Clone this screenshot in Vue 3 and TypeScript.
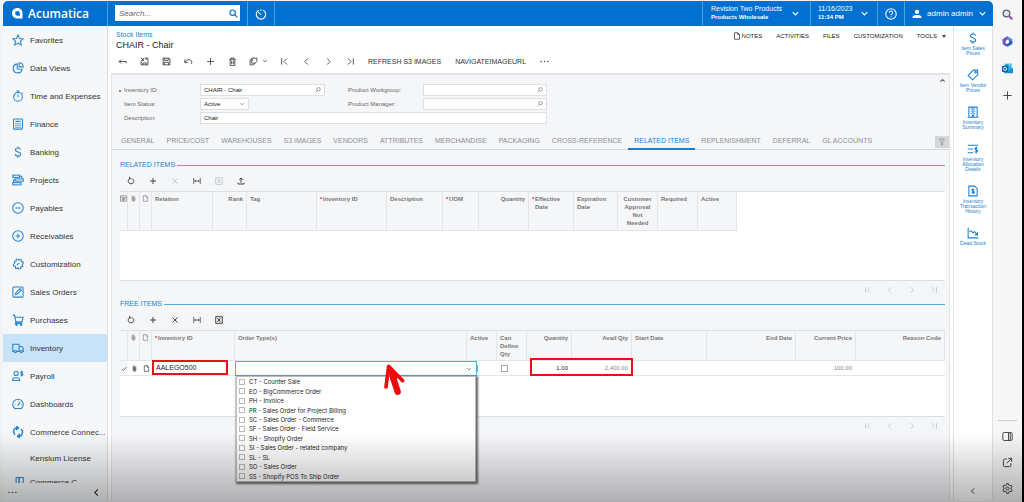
<script setup lang="ts">
import { h, ref } from 'vue'

const glyphs: Record<string, string> = {
  star: '<path d="M8 1.2l2 4.7 5 .4-3.8 3.3 1.2 5L8 12l-4.400 2.600 1.200-5L1 6.300l5-.4z"/>',
  pie: '<path d="M7 2.500a6 6 0 1 0 6.500 7L7 9.200z"/><path d="M9.500 1v5.500H15A5.700 5.700 0 0 0 9.500 1z"/>',
  stopwatch: '<circle cx="8" cy="9.200" r="5.800"/><path d="M8 9.500V6M6 1.200h4M8 1.200v2M13 3.500l1.200 1.200"/>',
  calculator: '<rect x="2" y="1.200" width="12" height="13.600" rx="1"/><path d="M4.500 4.500h7M4.500 7.500h1.600M7.200 7.500h1.600M10 7.500h1.600M4.500 10h1.600M7.200 10h1.600M10 10h1.600M4.500 12.500h1.600M7.200 12.500h1.600M10 12.500h1.600"/>',
  dollar: '<path d="M11.500 4.800C11.200 3.300 9.800 2.700 8 2.700c-2 0-3.400.9-3.400 2.500 0 3.600 7 1.800 7 5.400 0 1.700-1.600 2.700-3.600 2.700s-3.500-.8-3.700-2.500M8 .5v2.200M8 13.300v2.200"/>',
  gantt: '<rect x="1" y="1.500" width="9" height="3"/><rect x="4" y="6.500" width="11" height="3"/><rect x="1" y="11.500" width="11" height="3"/><path d="M10 3h3v3.500M4 8H2v3.500"/>',
  minusCircle: '<circle cx="8" cy="8" r="7"/><path d="M4.800 8h6.400"/>',
  plusCircle: '<circle cx="8" cy="8" r="7"/><path d="M5 8h6M8 5v6"/>',
  puzzle: '<path d="M3.500 4.500l2.200-.6C4.800 1.500 8 .2 8.800 2.800l3-.9.9 3c2.600-.5 3.200 2.700.8 3.500l.8 3-2.700.8c.6 2.500-2.600 3.300-3.400 1L5 14l-.9-3.200C1.500 11.500.8 8.300 3.200 7.500z"/><path d="M6.500 9.500l3-3"/>',
  edit: '<rect x="1.200" y="1.200" width="13.600" height="13.600" rx="1.500"/><path d="M4.500 11.500l.7-2.500 5.600-5.600 1.800 1.800L7 10.800z"/>',
  cart: '<path d="M1 1.500h2.300l2 9h8l1.500-6.300H4M5.300 10.500l-.8 2h9"/><circle cx="6" cy="14.300" r=".9"/><circle cx="12" cy="14.300" r=".9"/>',
  truck: '<path d="M3 12.500H1V3h8.500v9.500H6M9.500 6H13l2.200 3v3.500H14M9.500 12.500H11"/><circle cx="4.500" cy="12.700" r="1.500"/><circle cx="12.500" cy="12.700" r="1.500"/>',
  payroll: '<circle cx="5.500" cy="4.500" r="2.800"/><path d="M.8 14v-1.500c0-2.800 9.400-2.800 9.400 0V14zM14.500 3.200c-.5-1.500-3-1.200-3 .2 0 1.700 3.200 1 3.200 2.700 0 1.500-3 1.600-3.400 0M13 1v7.500"/>',
  gauge: '<path d="M3.500 14a7 7 0 1 1 9 0z"/><path d="M7.500 10.500L11 5.500M3.500 9h1M8 3.500v1M12 9h1"/>',
  sync: '<path d="M6 2.300C1.500 3.300.8 9 4 11.800M10 13.700c4.500-1 5.200-6.700 2-9.500" stroke-width="2"/><path d="M6 0l3 2.500L6 5zM10 11l-3 2.500L10 16z" fill="currentColor"/>',
  screens: '<path d="M1 12h4M1 15h14" stroke-width="2"/><rect x="5.500" y="2" width="4" height="9"/><rect x="9.500" y="2" width="5.500" height="9"/>',
  search: '<circle cx="6.500" cy="6.500" r="4.800"/><path d="M10 10l5 5"/>',
  lookup: '<circle cx="9.500" cy="6" r="4.500"/><path d="M6.500 9.500L1.500 14.500"/>',
  timer: '<path d="M5 3a6.300 6.300 0 1 0 6 0M8 1.500V4M8 9L4.500 5.500"/>',
  help: '<circle cx="8" cy="8" r="7"/><path d="M5.800 6.200c0-3 4.400-2.700 4.400 0 0 1.600-2.200 1.700-2.200 3.300M8 11v1.300"/>',
  user: '<circle cx="8" cy="4.500" r="3.500" fill="currentColor" stroke="none"/><path d="M1 14.500v-2c0-3.800 14-3.800 14 0v2z" fill="currentColor" stroke="none"/>',
  down: '<path d="M3 5.500l5 5 5-5"/>',
  up: '<path d="M3 10.500l5-5 5 5"/>',
  left: '<path d="M10.500 2.500L5 8l5.500 5.500"/>',
  right: '<path d="M5.500 2.500L11 8l-5.500 5.500"/>',
  first: '<path d="M3 2.500v11M12.500 2.500L7 8l5.500 5.500"/>',
  last: '<path d="M13 2.500v11M3.500 2.500L9 8l-5.500 5.500"/>',
  back: '<path d="M14.500 11V8H2M5.500 4.500L2 8l3.500 3.500"/>',
  saveClose: '<path d="M2 7.500V14h12V2H8M5 14v-3.500h6V14M1.500 1.500L6 6M6 2v4H2M11 2v3"/>',
  save: '<path d="M2 2h11l1 1v11H2zM4.500 2v4h6.500V2M4 14V9.500h8V14"/>',
  undo: '<path d="M2 9.500C4 3.500 13 3 14 9c.3 1.500-.5 2.800-1.500 3.500M1.500 4.500v5.200h5"/>',
  plus: '<path d="M8 2v12M2 8h12"/>',
  trash: '<path d="M2.500 4h11M5.500 4V1.800h5V4M3.800 4v11h8.400V4M6.500 6.500v6M9.500 6.500v6"/>',
  copy: '<path d="M2 5h5M2 5v9h6l3-3M5 2h9v6l-3 3H5z"/>',
  dots: '<g fill="currentColor" stroke="none"><circle cx="2" cy="8" r="1.300"/><circle cx="8" cy="8" r="1.300"/><circle cx="14" cy="8" r="1.300"/></g>',
  doc: '<path d="M3 1.500h6.500L13 5v9.500H3zM9.500 1.500V5H13"/>',
  refresh: '<path d="M10.500 3.200a5.500 5.500 0 1 1-5 0M5 0v3.800h4"/>',
  cross: '<path d="M3 3l10 10M13 3L3 13"/>',
  fit: '<path d="M1.500 2v12M14.500 2v12M3 8h10M5.500 6L3.500 8l2 2M10.500 6l2 2-2 2" stroke-width="1.400"/>',
  excel: '<rect x="1.500" y="1.500" width="13" height="13"/><path d="M5 4.500l6 7M11 4.500l-6 7" stroke-width="2"/>',
  upload: '<path d="M8 11.500V2M4.500 5.500L8 2l3.500 3.500M2 11.500V14h12v-2.500"/>',
  clip: '<path d="M11 5v6.500a3 3 0 0 1-6 0V4a2 2 0 0 1 4 0v7a1 1 0 0 1-2 0V5" stroke-width="1.600"/>',
  gridIcon: '<rect x="1.500" y="2" width="13" height="12"/><path d="M1.500 5h13M5 8h6v3.500H5zM8 5v9"/>',
  check: '<path d="M2.500 10l3 2L13 5"/>',
  tag: '<path d="M1.500 8.500l7-7H14l.5 6-7 7z"/><circle cx="11.500" cy="4.300" r="1"/>',
  building: '<path d="M2.500 15V1.500h11V15M.8 15h14.400M5 4h1.500M9.500 4H11M5 7h1.500M9.500 7H11M5 10h1.500M9.500 10H11M7 15v-2.500h2V15M8 2v9"/>',
  allocation: '<path d="M1 3h14M1 8h7M1 13h7M14 6.800c-1-1-3.500-.8-3.500.8 0 1.800 3.700 1.200 3.700 3s-3 1.800-4 .8M12.300 5v9"/>',
  history: '<path d="M2.500 1.500H10L13.500 5v9.500h-11z"/><path d="M9.800 6.200c-1-1-3.300-.8-3.300.7 0 1.600 3.500 1.100 3.500 2.800 0 1.500-2.700 1.600-3.700.6M8.200 4.500v7.500"/>',
  chart: '<path d="M1.500 1v13.500H15M3 6l3-1 2 3 2-2 4 4.500M14 7v3.500h-3.500"/>',
  filter: '<path d="M3 2h10L9.500 7v3.500h-3V7zM8 10v4M5.500 12L8 14.500l2.500-2.500"/>',
  panel: '<rect x="1.200" y="2.200" width="13.600" height="11.600" rx="2"/><path d="M9.500 2.500v11M12 2.500v11"/>',
  external: '<path d="M7 3H4a2 2 0 0 0-2 2v7a2 2 0 0 0 2 2h7a2 2 0 0 0 2-2V9M9 2h5v5M14 2L7 9"/>',
  gear: '<path d="M6.700 1h2.600l.5 2.100 1.600.9 2.100-.7 1.300 2.300-1.600 1.500v1.800l1.600 1.500-1.300 2.300-2.100-.7-1.600.9-.5 2.100H6.700l-.5-2.100-1.600-.9-2.100.7-1.300-2.300 1.600-1.500V7.100L1.200 5.600l1.300-2.300 2.100.7 1.600-.9z"/><circle cx="8" cy="8" r="2.200"/>',
}

const Icon = (props: { name: string }) =>
  h('svg', { class: 'icon', viewBox: '0 0 16 16', 'aria-hidden': 'true', innerHTML: glyphs[props.name] })
Icon.props = ['name']

const nav = [
  ['star', 'Favorites'], ['pie', 'Data Views'], ['stopwatch', 'Time and Expenses'], ['calculator', 'Finance'],
  ['dollar', 'Banking'], ['gantt', 'Projects'], ['minusCircle', 'Payables'], ['plusCircle', 'Receivables'],
  ['puzzle', 'Customization'], ['edit', 'Sales Orders'], ['cart', 'Purchases'], ['truck', 'Inventory'],
  ['payroll', 'Payroll'], ['gauge', 'Dashboards'], ['sync', 'Commerce Connec...'],
]
const tabs = ['GENERAL', 'PRICE/COST', 'WAREHOUSES', 'S3 IMAGES', 'VENDORS', 'ATTRIBUTES', 'MERCHANDISE', 'PACKAGING',
  'CROSS-REFERENCE', 'RELATED ITEMS', 'REPLENISHMENT', 'DEFERRAL', 'GL ACCOUNTS']
const activeTab = ref('RELATED ITEMS')

const recordActions = [
  ['back', 'Back'], ['saveClose', 'Save and close'], ['save', 'Save'], ['undo', 'Undo'], ['plus', 'Add'], ['trash', 'Delete'],
]
const pager = [['first', 'First'], ['left', 'Previous'], ['right', 'Next'], ['last', 'Last']]

interface Action { icon: string; label: string; off?: boolean }
const relatedActions: Action[] = [
  { icon: 'refresh', label: 'Refresh' }, { icon: 'plus', label: 'Add row' }, { icon: 'cross', label: 'Delete row', off: true },
  { icon: 'fit', label: 'Fit columns' }, { icon: 'excel', label: 'Export', off: true }, { icon: 'upload', label: 'Upload' },
]
const freeActions: Action[] = [
  { icon: 'refresh', label: 'Refresh' }, { icon: 'plus', label: 'Add row' }, { icon: 'cross', label: 'Delete row' },
  { icon: 'fit', label: 'Fit columns' }, { icon: 'excel', label: 'Export' },
]

interface Column { text?: string; icon?: string; cls: string; align?: string; required?: boolean }
const relatedColumns: Column[] = [
  { icon: 'gridIcon', cls: 'w8' }, { icon: 'clip', cls: 'w12' }, { icon: 'doc', cls: 'w12' },
  { text: 'Relation', cls: 'w61' }, { text: 'Rank', cls: 'w34', align: 'end' }, { text: 'Tag', cls: 'w70' },
  { text: 'Inventory ID', cls: 'w70', required: true }, { text: 'Description', cls: 'w56' },
  { text: 'UOM', cls: 'w36', required: true }, { text: 'Quantity', cls: 'w50', align: 'end' },
  { text: 'Effective Date', cls: 'w45', required: true }, { text: 'Expiration Date', cls: 'w44' },
  { text: 'Customer Approval Not Needed', cls: 'w40', align: 'center' }, { text: 'Required', cls: 'w40' },
  { text: 'Active', cls: 'w39' },
]
const freeColumns: Column[] = [
  { cls: 'w8' }, { icon: 'clip', cls: 'w12' }, { icon: 'doc', cls: 'w12' },
  { text: 'Inventory ID', cls: 'w83', required: true }, { text: 'Order Type(s)', cls: 'w232' }, { text: 'Active', cls: 'w30' },
  { text: 'Can Define Qty', cls: 'w30' }, { text: 'Quantity', cls: 'w45', align: 'end' },
  { text: 'Avail Qty', cls: 'w60', align: 'end' }, { text: 'Start Date', cls: 'w75' },
  { text: 'End Date', cls: 'w89', align: 'end' }, { text: 'Current Price', cls: 'w60', align: 'end' },
  { text: 'Reason Code', cls: 'rest', align: 'end' },
]
const orderTypes = ['CT - Counter Sale', 'EO - BigCommerce Order', 'PH - Invoice', 'PR - Sales Order for Project Billing',
  'SC - Sales Order - Commerce', 'SF - Sales Order - Field Service', 'SH - Shopify Order', 'SI - Sales Order - related company',
  'SL - SL', 'SO - Sales Order', 'SS - Shopify POS To Ship Order']
const shortcuts = [
  ['dollar', 'Item Sales Prices'], ['tag', 'Item Vendor Prices'], ['building', 'Inventory Summary'],
  ['allocation', 'Inventory Allocation Details'], ['history', 'Inventory Transaction History'], ['chart', 'Dead Stock'],
]
</script>

<template>
  <div class="window">
    <div class="app">
      <header class="topbar">
        <a class="brand" href="#">
          <svg class="brand-mark" viewBox="0 0 12 12" aria-hidden="true">
            <path fill="#fff" fill-rule="evenodd" d="M6 0c3.500 0 5.500 2.500 5.500 6v5.500H6C2.500 11.500 0 9.200 0 5.800S2.500 0 6 0zM6 3.200C4.500 3.200 3.400 4.300 3.400 5.800S4.500 8.500 6 8.500h2.600V5.800C8.600 4.300 7.500 3.200 6 3.200z" />
          </svg>
          <span>Acumatica</span>
        </a>
        <label class="search">
          <input type="text" placeholder="Search..." aria-label="Search">
          <Icon name="search" />
        </label>
        <button class="top-cell timer" aria-label="Timer"><Icon name="timer" /></button>
        <span class="grow"></span>
        <button class="top-cell company"><span class="stack"><span>Revision Two Products</span><small>Products Wholesale</small></span><Icon name="down" /></button>
        <button class="top-cell date"><span class="stack"><span>11/16/2023</span><small>11:34 PM</small></span><Icon name="down" /></button>
        <button class="top-cell help" aria-label="Help"><Icon name="help" /></button>
        <button class="top-cell account"><Icon name="user" /><span>admin admin</span><Icon name="down" /></button>
      </header>

      <div class="body">
        <nav class="sidebar">
          <div class="nav-list">
            <a v-for="[icon, label] in nav" :key="label" href="#" class="nav-item" :class="{ current: label === 'Inventory' }">
              <Icon :name="icon" /><span>{{ label }}</span>
            </a>
            <a href="#" class="nav-item plain"><span>Kensium License</span></a>
            <a href="#" class="nav-item short"><Icon name="screens" /><span>Commerce C...</span></a>
          </div>
          <div class="nav-foot">
            <button aria-label="More"><Icon name="dots" /></button>
            <button aria-label="Collapse"><Icon name="left" /></button>
          </div>
        </nav>

        <main class="content">
          <div class="heading">
            <div>
              <a class="crumb" href="#">Stock Items</a>
              <h1>CHAIR - Chair</h1>
            </div>
            <div class="links">
              <a href="#"><Icon name="doc" />NOTES</a>
              <a href="#">ACTIVITIES</a>
              <a href="#">FILES</a>
              <a href="#">CUSTOMIZATION</a>
              <a href="#" class="tools">TOOLS<i class="caret"></i></a>
            </div>
          </div>

          <div class="toolbar">
            <button v-for="[icon, label] in recordActions" :key="icon" :aria-label="label"><Icon :name="icon" /></button>
            <button class="copy" aria-label="Clipboard"><Icon name="copy" /><Icon name="down" class="tiny" /></button>
            <button v-for="[icon, label] in pager" :key="icon" :aria-label="label"><Icon :name="icon" /></button>
            <button class="word">REFRESH S3 IMAGES</button>
            <button class="word">NAVIGATEIMAGEURL</button>
            <button aria-label="More actions"><Icon name="dots" /></button>
          </div>

          <div class="panel">
            <form class="summary" @submit.prevent>
              <label for="inv" class="need">Inventory ID:</label>
              <span class="field"><input id="inv" value="CHAIR - Chair"><Icon name="lookup" /></span>
              <label for="group" class="second">Product Workgroup:</label>
              <span class="field"><input id="group"><Icon name="lookup" /></span>
              <label for="status">Item Status:</label>
              <span class="field status"><select id="status"><option>Active</option></select><Icon name="down" /></span>
              <label for="manager" class="second">Product Manager:</label>
              <span class="field"><input id="manager"><Icon name="lookup" /></span>
              <label for="descr">Description:</label>
              <span class="field wide"><input id="descr" value="Chair"></span>
              <button type="button" class="fold" aria-label="Collapse summary"><Icon name="up" /></button>
            </form>

            <div class="tabs" role="tablist">
              <button v-for="tab in tabs" :key="tab" role="tab" :aria-selected="tab === activeTab" :class="{ on: tab === activeTab }" @click="activeTab = tab">{{ tab }}</button>
              <span class="grow"></span>
              <button class="filter" aria-label="Tab menu"><Icon name="filter" /></button>
            </div>

            <section class="block">
              <h2>RELATED ITEMS</h2>
              <div class="grid-tools">
                <button v-for="a in relatedActions" :key="a.icon" :aria-label="a.label" :disabled="a.off"><Icon :name="a.icon" /></button>
              </div>
              <div class="grid">
                <table class="related">
                  <thead>
                    <tr>
                      <th v-for="(c, i) in relatedColumns" :key="i" :class="[c.cls, c.align, { required: c.required, sign: c.icon }]">
                        <Icon v-if="c.icon" :name="c.icon" />{{ c.text }}
                      </th>
                    </tr>
                  </thead>
                </table>
              </div>
              <div class="pager"><button v-for="[icon, label] in pager" :key="icon" :aria-label="label" disabled><Icon :name="icon" /></button></div>
            </section>

            <section class="block">
              <h2>FREE ITEMS</h2>
              <div class="grid-tools">
                <button v-for="a in freeActions" :key="a.icon" :aria-label="a.label"><Icon :name="a.icon" /></button>
              </div>
              <div class="grid">
                <table class="free">
                  <thead>
                    <tr>
                      <th v-for="(c, i) in freeColumns" :key="i" :class="[c.cls, c.align, { required: c.required, sign: c.icon }]">
                        <Icon v-if="c.icon" :name="c.icon" />{{ c.text }}
                      </th>
                    </tr>
                  </thead>
                  <tbody>
                    <tr>
                      <td class="sign mark"><Icon name="check" /></td>
                      <td class="sign"><Icon name="clip" /></td>
                      <td class="sign"><Icon name="doc" /></td>
                      <td class="item">AALEGO500<span class="highlight"></span></td>
                      <td class="editing">
                        <div class="combo">
                          <input role="combobox" aria-label="Order types" aria-expanded="true"><Icon name="down" />
                          <div class="options">
                            <label v-for="o in orderTypes" :key="o"><input type="checkbox">{{ o }}</label>
                          </div>
                          <svg class="pointer" viewBox="0 0 60 90" aria-hidden="true">
                            <path d="M14 4L6 66M14 4L56 47" stroke-width="11" />
                            <path d="M17 12L24 44 41 34z" fill="#ee0a0e" stroke-width="9" />
                            <path d="M26 34L41 80" stroke-width="19" />
                          </svg>
                        </div>
                      </td>
                      <td class="box"><input type="checkbox" aria-label="Active"></td>
                      <td class="box"><input type="checkbox" aria-label="Can define quantity"></td>
                      <td class="end qty">1.00<span class="highlight"></span></td>
                      <td class="end faint">2,400.00</td>
                      <td></td>
                      <td></td>
                      <td class="end faint">100.00</td>
                      <td></td>
                    </tr>
                  </tbody>
                </table>
              </div>
              <div class="pager"><button v-for="[icon, label] in pager" :key="icon" :aria-label="label" disabled><Icon :name="icon" /></button></div>
            </section>
          </div>
        </main>

        <aside class="rail">
          <a v-for="[icon, label] in shortcuts" :key="label" href="#"><Icon :name="icon" /><span>{{ label }}</span></a>
          <span class="grow"></span>
          <button aria-label="Collapse shortcuts"><Icon name="left" /></button>
        </aside>
      </div>
    </div>

    <aside class="edge">
      <button aria-label="Search"><svg class="icon" viewBox="0 0 16 16"><path d="M10 10l5 5" stroke="#a23fc4" stroke-width="3" /><circle cx="6.500" cy="6.500" r="4.800" fill="#dfe6ec" stroke="#666" stroke-width="2" /></svg></button>
      <button aria-label="Microsoft 365"><svg class="icon solid" viewBox="0 0 16 16"><path d="M8 .5l7 4v5.500L10 8 8 5 3 12 1 10V5z" fill="#6a8be0" /><path d="M1 4.500L8 .5v4L5 6.500v4L8 12l-3 3-4-3.500z" fill="#7a52c8" /><path d="M15 7.500v4L8 15.500 4 13l6-3V6z" fill="#2460c0" /><circle cx="8" cy="8" r="2.300" fill="#fff" /></svg></button>
      <button aria-label="Outlook"><svg class="icon solid" viewBox="0 0 16 16"><path d="M4 1h10v9H4z" fill="#28a8ea" /><path d="M3 7l6 4 7-4v8H3z" fill="#1490df" /><path d="M9.500 1H14v4H9.500z" fill="#50d0f5" /><rect y="4" width="9" height="9" rx="1" fill="#0a62b8" /><circle class="ring" cx="4.500" cy="8.500" r="2.200" /></svg></button>
      <button aria-label="Add"><Icon name="plus" /></button>
      <span class="grow"></span>
      <hr>
      <button class="low" aria-label="Side panel"><Icon name="panel" /></button>
      <button class="low" aria-label="Open in new window"><Icon name="external" /></button>
      <button class="low" aria-label="Settings"><Icon name="gear" /></button>
    </aside>
    <div class="shade"></div>
  </div>
</template>

<style>
body { margin: 0; }
</style>

<style scoped>
* { box-sizing: border-box; }
.window {
  position: relative;
  display: flex;
  height: 100vh;
  overflow: hidden;
  padding: 1px 0 1px 3px;
  background: #f1f3f4;
  border-right: 2px solid #000;
  font-family: "Liberation Sans", Arial, sans-serif;
  font-size: 7px;
  color: #333;
}
button {
  display: flex;
  align-items: center;
  justify-content: center;
  padding: 0;
  border: 0;
  background: none;
  font: inherit;
  color: inherit;
}
input, select {
  min-width: 0;
  margin: 0;
  padding: 0;
  border: 0;
  outline: 0;
  background: none;
  font: inherit;
  color: inherit;
}
a { color: inherit; text-decoration: none; }
.grow { flex: 1; }
.icon {
  flex: none;
  width: 10px;
  height: 10px;
  fill: none;
  stroke: currentColor;
  stroke-width: 1.4;
}
.icon.solid { stroke: none; }
.ring { fill: none; stroke: #fff; stroke-width: 1.3; }
.app {
  flex: 1;
  min-width: 0;
  display: flex;
  flex-direction: column;
  border-radius: 5px;
  overflow: hidden;
  background: #fff;
}

/* top bar */
.topbar {
  flex: none;
  display: flex;
  align-items: stretch;
  height: 25px;
  background: #0071d0;
  color: #fff;
}
.brand {
  display: flex;
  align-items: center;
  gap: 5px;
  width: 105px;
  padding-left: 9px;
  border-right: 1px solid #4c9fe0;
  font: 600 12px "Open Sans", sans-serif;
}
.brand-mark { width: 11px; height: 11px; }
.search {
  display: flex;
  align-items: center;
  width: 125px;
  height: 16px;
  margin: 4px 7px 0;
  padding: 0 2px 0 4px;
  background: #fff;
  color: #0071d0;
}
.search input { flex: 1; font-size: 8px; font-style: italic; color: #333; }
.search input::placeholder { color: #666; }
.search .icon { width: 9px; height: 9px; stroke-width: 2; }
.top-cell { border-left: 1px solid #4c9fe0; }
.timer { width: 28px; border-right: 1px solid #4c9fe0; }
.stack { display: flex; flex-direction: column; text-align: left; line-height: 8px; padding-bottom: 1px; }
.stack small { font-size: 6px; font-weight: bold; line-height: 8px; }
.company { width: 108px; padding: 0 10px 0 8px; justify-content: space-between; }
.date { width: 67px; padding: 0 8px 0 7px; justify-content: space-between; }
.topbar .top-cell .icon { stroke-width: 2; }
.top-cell > .icon:last-child { width: 9px; height: 9px; }
.help { width: 27px; }
.top-cell.help .icon, .top-cell.timer .icon { width: 12px; height: 12px; stroke-width: 1.4; }
.account { width: 89px; padding: 0 6px 0 7px; justify-content: space-between; font-size: 8px; }

/* sidebar */
.body { flex: 1; min-height: 0; display: flex; }
.sidebar {
  flex: none;
  display: flex;
  flex-direction: column;
  width: 105px;
  background: #f5f7f9;
  border-right: 1px solid #d9dce0;
}
.nav-list { flex: 1; min-height: 0; overflow: hidden; }
.nav-item {
  display: flex;
  align-items: center;
  gap: 6px;
  height: 28px;
  padding-left: 9px;
  font-size: 8px;
  white-space: nowrap;
  color: #333;
}
.nav-item .icon { width: 12px; height: 12px; color: #2585d0; }
.nav-item.current { background: #c8e2f8; }
.nav-item.plain { height: 24px; padding-left: 27px; }
.nav-item.short { height: 24px; }
.nav-foot {
  flex: none;
  display: flex;
  align-items: center;
  justify-content: space-between;
  height: 18px;
  padding: 0 6px 0 5px;
}
.nav-foot .icon { width: 9px; height: 9px; stroke-width: 2; }

/* main column */
.content {
  flex: 1;
  min-width: 0;
  display: flex;
  flex-direction: column;
  padding: 0 3px;
}
.heading {
  display: flex;
  justify-content: space-between;
  padding: 4px 4px 0 5px;
}
.crumb { display: block; line-height: 9px; color: #1c7fce; }
h1 { margin: 0; font-size: 9px; font-weight: normal; line-height: 12px; color: #222; }
.links {
  display: flex;
  gap: 14px;
  height: 12px;
  font-size: 6px;
  line-height: 12px;
  color: #222;
}
.links a { display: flex; align-items: center; gap: 1px; }
.links .icon { width: 8px; height: 8px; }
.links .caret { margin-left: 4px; border: 2px solid transparent; border-top: 3px solid #444; border-bottom: 0; }
.toolbar { display: flex; height: 21px; margin-bottom: 1px; color: #444; }
.toolbar button { width: 22px; height: 20px; }
.toolbar .icon { width: 9px; height: 9px; stroke-width: 1.6; }
.toolbar .copy { width: 30px; gap: 4px; }
.toolbar .icon.tiny { width: 6px; height: 6px; stroke-width: 2; }
.toolbar .word { width: auto; padding: 0 7px; color: #333; }
.panel {
  flex: 1;
  min-height: 0;
  background: #f5f6f8;
  border: solid #e2e4e8;
  border-width: 2px 1px 0;
}

/* summary form */
.summary {
  position: relative;
  display: grid;
  grid-template-columns: 76px 125px 98px 124px;
  align-items: center;
  row-gap: 2px;
  padding: 9px 0 9px 12px;
  font-size: 6px;
  color: #666;
}
.summary .second { padding-left: 23px; }
.summary .need { position: relative; }
.need::before {
  content: "";
  position: absolute;
  left: -5px;
  top: 3px;
  width: 2px;
  height: 2px;
  background: #888;
}
.field {
  display: flex;
  align-items: center;
  height: 12px;
  padding: 0 3px;
  border: 1px solid #dcdfe3;
  background: #fff;
  color: #222;
}
.field input, .field select { flex: 1; appearance: none; }
.field .icon { width: 6px; height: 6px; color: #555; }
.status { width: 49px; }
.wide { grid-column: span 3; }
.fold { position: absolute; right: 2px; top: 1px; width: 9px; height: 9px; }
.fold .icon { width: 7px; height: 7px; stroke-width: 2.5; }

/* tabs */
.tabs {
  display: flex;
  height: 17px;
  padding-left: 3px;
  border-bottom: 1px solid #d5d8dc;
  color: #8b8f94;
}
.tabs button { padding: 0 6px; height: 17px; white-space: nowrap; border-bottom: 2px solid transparent; }
.tabs .on { color: #1c7fce; border-color: #1c7fce; }
.tabs .filter { width: 14px; height: 12px; margin-top: 3px; padding: 0; border: 0; background: #d5d6d8; }
.filter .icon { width: 8px; height: 8px; }

/* grids */
.block { padding: 10px 4px 0 8px; }
.block + .block { padding-top: 0; }
h2 {
  display: flex;
  align-items: center;
  gap: 2px;
  margin: 0;
  font-size: 7px;
  font-weight: normal;
  line-height: 10px;
  color: #1c7fce;
}
h2::after { content: ""; flex: 1; height: 1px; background: #55addd; }
.grid-tools { display: flex; height: 21px; color: #333; }
.grid-tools button { width: 22px; height: 22px; }
.grid-tools .icon { width: 8px; height: 8px; stroke-width: 1.8; }
.grid-tools button:disabled { color: #c4c7ca; }
.grid {
  height: 90px;
  background: #fff;
  border: solid #dcdfe3;
  border-width: 1px 0;
}
.block + .block .grid { height: 87px; }
table { table-layout: fixed; border-collapse: separate; border-spacing: 0; }
.related { width: 617px; }
.free { width: 100%; }
th {
  height: 39px;
  padding: 3px 3px 0;
  vertical-align: top;
  text-align: left;
  line-height: 8px;
  font-size: 6px;
  background: #f5f6f8;
  border: solid #e3e5e8;
  border-width: 0 1px 1px 0;
  color: #777;
}
.free th { height: 30px; }
th.end, td.end { text-align: right; }
th.center { text-align: center; }
th.sign { padding: 3px 0 0; }
td.sign { padding: 0; }
.sign .icon { display: block; margin: 0 auto; width: 7px; height: 7px; }
th.required { position: relative; padding-left: 6px; }
th.required::before { content: "*"; position: absolute; left: 3px; color: #e0322c; }
.w8 { width: 8px; } .w12 { width: 12px; } .w30 { width: 30px; } .w34 { width: 34px; }
.w36 { width: 36px; } .w39 { width: 39px; } .w40 { width: 40px; } .w44 { width: 44px; }
.w45 { width: 45px; } .w50 { width: 50px; } .w56 { width: 56px; } .w60 { width: 60px; }
.w61 { width: 61px; } .w70 { width: 70px; } .w75 { width: 75px; } .w83 { width: 83px; }
.w89 { width: 89px; } .w232 { width: 232px; }
td {
  height: 15px;
  padding: 0 4px;
  border-bottom: 1px solid #e3e5e8;
  font-size: 6px;
  color: #222;
}
td.mark { background: #f5f6f8; }
td.faint { color: #888; }
.item, .qty, .editing { position: relative; }
td.item { font-size: 7px; line-height: 8px; }
.highlight {
  position: absolute;
  z-index: 2;
  inset: -1px 7px 0 0;
  border: 2px solid #e81216;
}
.qty .highlight { inset: -3px -61px -1px 3px; }
.box input {
  display: block;
  appearance: none;
  width: 7px;
  height: 7px;
  border: 1px solid #aaa;
  background: #fff;
}
.combo {
  position: absolute;
  z-index: 3;
  top: 0;
  left: 0;
  width: 242px;
  height: 15px;
  display: flex;
  align-items: center;
  padding: 0 4px;
  border: 1px solid #5aaadb;
  background: #fff;
}
.combo > input { flex: 1; }
.combo > .icon { width: 6px; height: 6px; }
.options {
  position: absolute;
  top: 14px;
  left: 0;
  right: 0;
  height: 106px;
  display: flex;
  flex-direction: column;
  background: #fff;
  border: 1px solid #bbb;
  box-shadow: 1px 1px 2px 1px #666;
}
.options label { flex: 1; display: flex; align-items: center; gap: 4px; padding-left: 2px; font-family: Inter, sans-serif; }
.options input { appearance: none; width: 6px; height: 6px; border: 1px solid #bbb; }
.pointer {
  position: absolute;
  z-index: 4;
  top: 3px;
  left: 148px;
  width: 20px;
  height: 30px;
  overflow: visible;
  fill: none;
  stroke: #ee0a0e;
  stroke-linecap: round;
  stroke-linejoin: round;
}
.pager { display: flex; justify-content: flex-end; height: 18px; color: #b9bcc0; }
.pager button { width: 22px; height: 18px; }
.pager .icon { width: 8px; height: 8px; }

/* right rails */
.rail {
  flex: none;
  display: flex;
  flex-direction: column;
  align-items: center;
  width: 40px;
  padding: 6px 4px;
  border: solid #dfe1e5;
  border-width: 0 1px;
  color: #1c7fce;
}
.rail a {
  display: flex;
  flex-direction: column;
  align-items: center;
  gap: 2px;
  margin-bottom: 13px;
  font-size: 5px;
  line-height: 5px;
  text-align: center;
}
.rail .icon { width: 12px; height: 12px; }
.rail button { color: #444; }
.rail button .icon { width: 8px; height: 8px; stroke-width: 2; }
.edge {
  flex: none;
  display: flex;
  flex-direction: column;
  align-items: center;
  width: 29px;
  background: #f6f6f7;
  color: #444;
}
.edge button { width: 27px; height: 27px; }
.edge .low { height: 26px; }
.edge .icon { width: 11px; height: 11px; }
.edge hr { width: 19px; margin: 0 0 2px; border: 0; border-top: 1px solid #ccc; }
.shade {
  position: absolute;
  z-index: 10;
  inset: auto 0 0;
  height: 68px;
  background: linear-gradient(transparent, rgba(0, 0, 0, 0.29));
  pointer-events: none;
}
</style>
